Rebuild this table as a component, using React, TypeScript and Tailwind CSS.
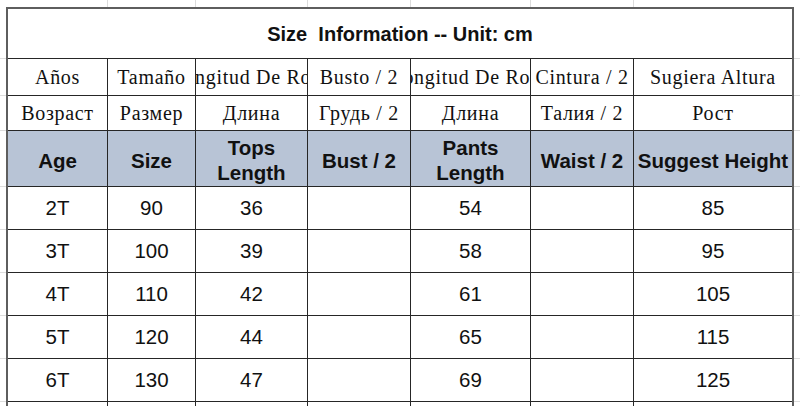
import React from "react";

// column widths incl. the 1px right border (last column has none)
const colW = ["w-[100px]", "w-[88px]", "w-[112px]", "w-[103px]", "w-[120px]", "w-[103px]", "w-[158px]"];

const spanish = ["Años", "Tamaño", "Longitud De Ropa", "Busto / 2", "Longitud De Ropa", "Cintura / 2", "Sugiera Altura"];
const russian = ["Возраст", "Размер", "Длина", "Грудь / 2", "Длина", "Талия / 2", "Рост"];
const header = [["Age"], ["Size"], ["Tops", "Length"], ["Bust / 2"], ["Pants", "Length"], ["Waist / 2"], ["Suggest Height"]];

const data = [
  ["2T", "90", "36", "", "54", "", "85"],
  ["3T", "100", "39", "", "58", "", "95"],
  ["4T", "110", "42", "", "61", "", "105"],
  ["5T", "120", "44", "", "65", "", "115"],
  ["6T", "130", "47", "", "69", "", "125"],
];

const sans = "font-['Liberation_Sans',Arial,sans-serif]";
const serif = "font-['Liberation_Serif','Times_New_Roman',serif]";

// one sheet row: light gridline gutters on both sides, bordered table cells in the middle
const SheetRow = ({
  height,
  top,
  children,
}: {
  height: string;
  top?: boolean;
  children: React.ReactNode;
}) => (
  <div className={`flex ${height}`}>
    <div className="w-[6px] shrink-0 border-b border-[#dcdcdc]" />
    <div
      className={`flex w-[788px] shrink-0 border-x-2 border-[#5e5e5e] ${top ? "border-t-2" : ""}`}
    >
      {children}
    </div>
    <div className="flex-1 border-b border-[#dcdcdc]" />
  </div>
);

const Cell = ({
  i,
  className = "",
  children,
}: {
  i: number;
  className?: string;
  children?: React.ReactNode;
}) => (
  <div
    className={`${colW[i]} shrink-0 flex items-center justify-center overflow-hidden whitespace-nowrap border-b border-[#262626] ${
      i < 6 ? "border-r" : ""
    } ${className}`}
  >
    {children}
  </div>
);

export default function App() {
  return (
    <div className="w-[800px] h-[406px] overflow-hidden bg-white text-[#111]">
      {/* sheet gridlines above the table */}
      <div className="flex h-[7px]">
        <div className="w-[8px] shrink-0" />
        {colW.map((w, i) => (
          <div key={i} className={`${w} shrink-0 ${i < 6 ? "border-r border-[#dcdcdc]" : ""}`} />
        ))}
      </div>

      <SheetRow height="h-[52px]" top>
        <div
          className={`flex-1 flex items-center justify-center border-b border-[#262626] ${sans} text-[20px] font-bold whitespace-pre`}
        >
          {"Size  Information -- Unit: cm"}
        </div>
      </SheetRow>

      <SheetRow height="h-[37px]">
        {spanish.map((t, i) => (
          <Cell key={i} i={i} className={`${serif} text-[20px] tracking-[0.7px]`}>
            {t}
          </Cell>
        ))}
      </SheetRow>

      <SheetRow height="h-[35px]">
        {russian.map((t, i) => (
          <Cell key={i} i={i} className={`${serif} text-[20px] tracking-[0.7px]`}>
            {t}
          </Cell>
        ))}
      </SheetRow>

      <SheetRow height="h-[56px]">
        {header.map((lines, i) => (
          <Cell key={i} i={i} className={`bg-[#b8c4d6] ${sans} text-[20.5px] font-bold pt-[3px]`}>
            <div className="flex flex-col items-center leading-[25px]">
              {lines.map((l) => (
                <span key={l}>{l}</span>
              ))}
            </div>
          </Cell>
        ))}
      </SheetRow>

      {data.map((row, r) => (
        <SheetRow key={r} height="h-[43px]">
          {row.map((t, i) => (
            <Cell key={i} i={i} className={`${sans} text-[20.5px] pt-[1px]`}>
              {t}
            </Cell>
          ))}
        </SheetRow>
      ))}

      <SheetRow height="h-[43px]">
        {colW.map((_, i) => (
          <Cell key={i} i={i} />
        ))}
      </SheetRow>
    </div>
  );
}
